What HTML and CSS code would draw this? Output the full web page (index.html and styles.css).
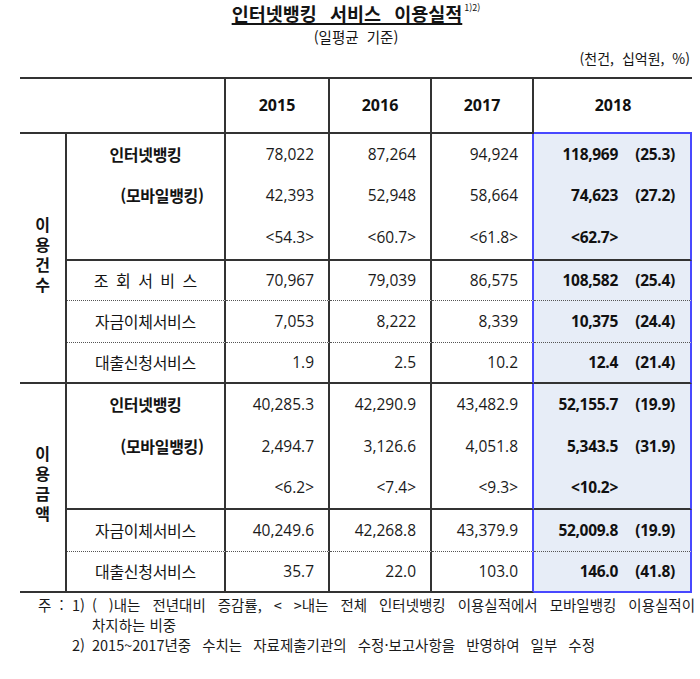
FILE: index.html
```html
<!DOCTYPE html>
<html lang="ko">
<head>
<meta charset="utf-8">
<title>인터넷뱅킹 서비스 이용실적</title>
<link rel="stylesheet" href="styles.css">
</head>
<body>
<div class="page">
  <div class="head">
    <h1 class="title"><span class="t">인터넷뱅킹 서비스 이용실적</span><sup>1)2)</sup></h1>
    <div class="sub">(일평균 기준)</div>
  </div>
  <div class="unit">(천건, 십억원, %)</div>
  <table class="tbl">
    <colgroup>
      <col class="w-cat"><col class="w-lab"><col class="w-15"><col class="w-16"><col class="w-17"><col class="w-18">
    </colgroup>
    <thead>
      <tr class="r-head">
        <th colspan="2" class="hc"></th>
        <th class="hc">2015</th>
        <th class="hc">2016</th>
        <th class="hc">2017</th>
        <th class="h18">2018</th>
      </tr>
    </thead>
    <tbody>
      <tr class="r41">
        <td rowspan="6" class="cat"><span class="vt">이용건수</span></td>
        <td class="lab b">인터넷뱅킹</td>
        <td class="n">78,022</td><td class="n">87,264</td><td class="n n17">94,924</td>
        <td class="y"><span class="v">118,969</span><span class="p">(25.3)</span></td>
      </tr>
      <tr class="r42">
        <td class="lab b mob">(모바일뱅킹)</td>
        <td class="n">42,393</td><td class="n">52,948</td><td class="n n17">58,664</td>
        <td class="y"><span class="v">74,623</span><span class="p">(27.2)</span></td>
      </tr>
      <tr class="r44 sep">
        <td class="lab"></td>
        <td class="n">&lt;54.3&gt;</td><td class="n">&lt;60.7&gt;</td><td class="n n17">&lt;61.8&gt;</td>
        <td class="y"><span class="v">&lt;62.7&gt;</span><span class="p"></span></td>
      </tr>
      <tr class="r40 dot">
        <td class="lab"><span class="wide">조회서비스</span></td>
        <td class="n">70,967</td><td class="n">79,039</td><td class="n n17">86,575</td>
        <td class="y"><span class="v">108,582</span><span class="p">(25.4)</span></td>
      </tr>
      <tr class="r42 dot">
        <td class="lab">자금이체서비스</td>
        <td class="n">7,053</td><td class="n">8,222</td><td class="n n17">8,339</td>
        <td class="y"><span class="v">10,375</span><span class="p">(24.4)</span></td>
      </tr>
      <tr class="r41 sep">
        <td class="lab">대출신청서비스</td>
        <td class="n">1.9</td><td class="n">2.5</td><td class="n n17">10.2</td>
        <td class="y"><span class="v">12.4</span><span class="p">(21.4)</span></td>
      </tr>
      <tr class="r42">
        <td rowspan="5" class="cat"><span class="vt">이용금액</span></td>
        <td class="lab b">인터넷뱅킹</td>
        <td class="n">40,285.3</td><td class="n">42,290.9</td><td class="n n17">43,482.9</td>
        <td class="y"><span class="v">52,155.7</span><span class="p">(19.9)</span></td>
      </tr>
      <tr class="r42">
        <td class="lab b mob">(모바일뱅킹)</td>
        <td class="n">2,494.7</td><td class="n">3,126.6</td><td class="n n17">4,051.8</td>
        <td class="y"><span class="v">5,343.5</span><span class="p">(31.9)</span></td>
      </tr>
      <tr class="r42 sep">
        <td class="lab"></td>
        <td class="n">&lt;6.2&gt;</td><td class="n">&lt;7.4&gt;</td><td class="n n17">&lt;9.3&gt;</td>
        <td class="y"><span class="v">&lt;10.2&gt;</span><span class="p"></span></td>
      </tr>
      <tr class="r42 dot">
        <td class="lab">자금이체서비스</td>
        <td class="n">40,249.6</td><td class="n">42,268.8</td><td class="n n17">43,379.9</td>
        <td class="y"><span class="v">52,009.8</span><span class="p">(19.9)</span></td>
      </tr>
      <tr class="r41 sep last">
        <td class="lab">대출신청서비스</td>
        <td class="n">35.7</td><td class="n">22.0</td><td class="n n17">103.0</td>
        <td class="y"><span class="v">146.0</span><span class="p">(41.8)</span></td>
      </tr>
    </tbody>
  </table>
  <div class="notes">
    <div class="note">
      <span class="ju">주 :</span><span class="no">1)</span>
      <div class="nt">
        <div class="l1">( )내는 전년대비 증감률, &lt; &gt;내는 전체 인터넷뱅킹 이용실적에서 모바일뱅킹 이용실적이</div>
        <div>차지하는 비중</div>
      </div>
    </div>
    <div class="note">
      <span class="ju"></span><span class="no">2)</span>
      <div class="nt l3">2015~2017년중 수치는 자료제출기관의 수정·보고사항을 반영하여 일부 수정</div>
    </div>
  </div>
</div>
</body>
</html>
```

FILE: styles.css
```css
body {
  margin: 0;
  background: #ffffff;
  color: #141414;
  font-family: "Noto Sans CJK KR", sans-serif;
}

.page {
  width: 700px;
}

.head {
  width: 672px;
  margin-left: 20px;
  padding-top: 2px;
  text-align: center;
}

.title {
  margin: 0;
  font-size: 18.5px;
  font-weight: 700;
  line-height: 22px;
  word-spacing: 8px;
}

.title .t {
  text-decoration: underline;
  text-decoration-thickness: 1.5px;
  text-underline-offset: 2px;
}

.title sup {
  font-size: 9px;
  font-weight: 400;
  line-height: 12px;
  vertical-align: top;
  word-spacing: 0;
  margin-left: 2px;
}

.sub {
  margin-top: 4px;
  font-size: 14.5px;
  line-height: 18px;
  word-spacing: 4px;
}

.unit {
  width: 690px;
  margin-top: 3px;
  text-align: right;
  font-size: 14px;
  line-height: 18px;
  word-spacing: 4px;
}

.tbl {
  margin-top: 10px;
  margin-left: 20px;
  width: 672px;
  table-layout: fixed;
  border-collapse: separate;
  border-spacing: 0;
}

.w-cat { width: 47px; }
.w-lab { width: 159px; }
.w-15 { width: 104px; }
.w-16 { width: 102px; }
.w-17 { width: 102px; }
.w-18 { width: 158px; }

.tbl th,
.tbl td {
  padding: 0 0 2px 0;
  box-sizing: border-box;
  vertical-align: middle;
}

.r-head { height: 57px; }
.r40 { height: 40px; }
.r41 { height: 41px; }
.r42 { height: 42px; }
.r44 { height: 44px; }

.tbl th {
  border-top: 2px solid #333;
  border-bottom: 2px solid #333;
  font-family: "Open Sans", "Noto Sans CJK KR", sans-serif;
  font-size: 16px;
  font-weight: 700;
  color: #111;
  text-align: center;
}

.tbl th.hc {
  border-right: 2px solid #333;
}

.tbl th.h18 {
  border-bottom-color: #4848ff;
}

.cat {
  border-right: 2px solid #333;
  border-bottom: 2px solid #333;
  text-align: center;
  font-size: 16px;
  font-weight: 700;
}

.vt {
  display: inline-block;
  writing-mode: vertical-rl;
  text-orientation: upright;
  letter-spacing: 4px;
  line-height: 20px;
  margin-bottom: -4px;
}

.lab {
  border-right: 2px solid #333;
  text-align: center;
  font-size: 16px;
  letter-spacing: -0.3px;
}

.lab.b {
  font-weight: 700;
}

.lab.mob {
  padding-left: 33px;
}

.wide {
  letter-spacing: 7.5px;
  margin-right: -7.5px;
}

.n {
  border-right: 2px solid #333;
  padding-right: 14px !important;
  text-align: right;
  font-family: "Open Sans", "Noto Sans CJK KR", sans-serif;
  font-size: 15.5px;
  color: #1a1a1a;
}

.n.n17 {
  border-right-color: #4848ff;
}

.y {
  background: #e7edf7;
  border-right: 2px solid #4848ff;
  padding-right: 15px !important;
  text-align: right;
  font-family: "Open Sans", "Noto Sans CJK KR", sans-serif;
  font-size: 15.5px;
  font-weight: 700;
  letter-spacing: -0.3px;
  color: #111;
}

.y .p {
  display: inline-block;
  width: 57px;
  text-align: right;
}

.sep td.lab,
.sep td.n,
.sep td.y {
  border-bottom: 2px solid #333;
}

.dot td.lab,
.dot td.n,
.dot td.y {
  border-bottom: 1px dotted #555;
}

.last td.y {
  border-bottom-color: #4848ff;
}

.notes {
  margin-top: 2px;
  padding-left: 38px;
  padding-right: 5px;
  font-size: 14.5px;
  line-height: 20px;
  color: #1a1a1a;
}

.note {
  display: flex;
}

.ju {
  width: 34px;
  flex: none;
  word-spacing: 4px;
}

.no {
  width: 20px;
  flex: none;
}

.nt {
  flex: 1;
}

.l1 {
  text-align: justify;
  text-align-last: justify;
}

.l3 {
  word-spacing: 7px;
}
```
